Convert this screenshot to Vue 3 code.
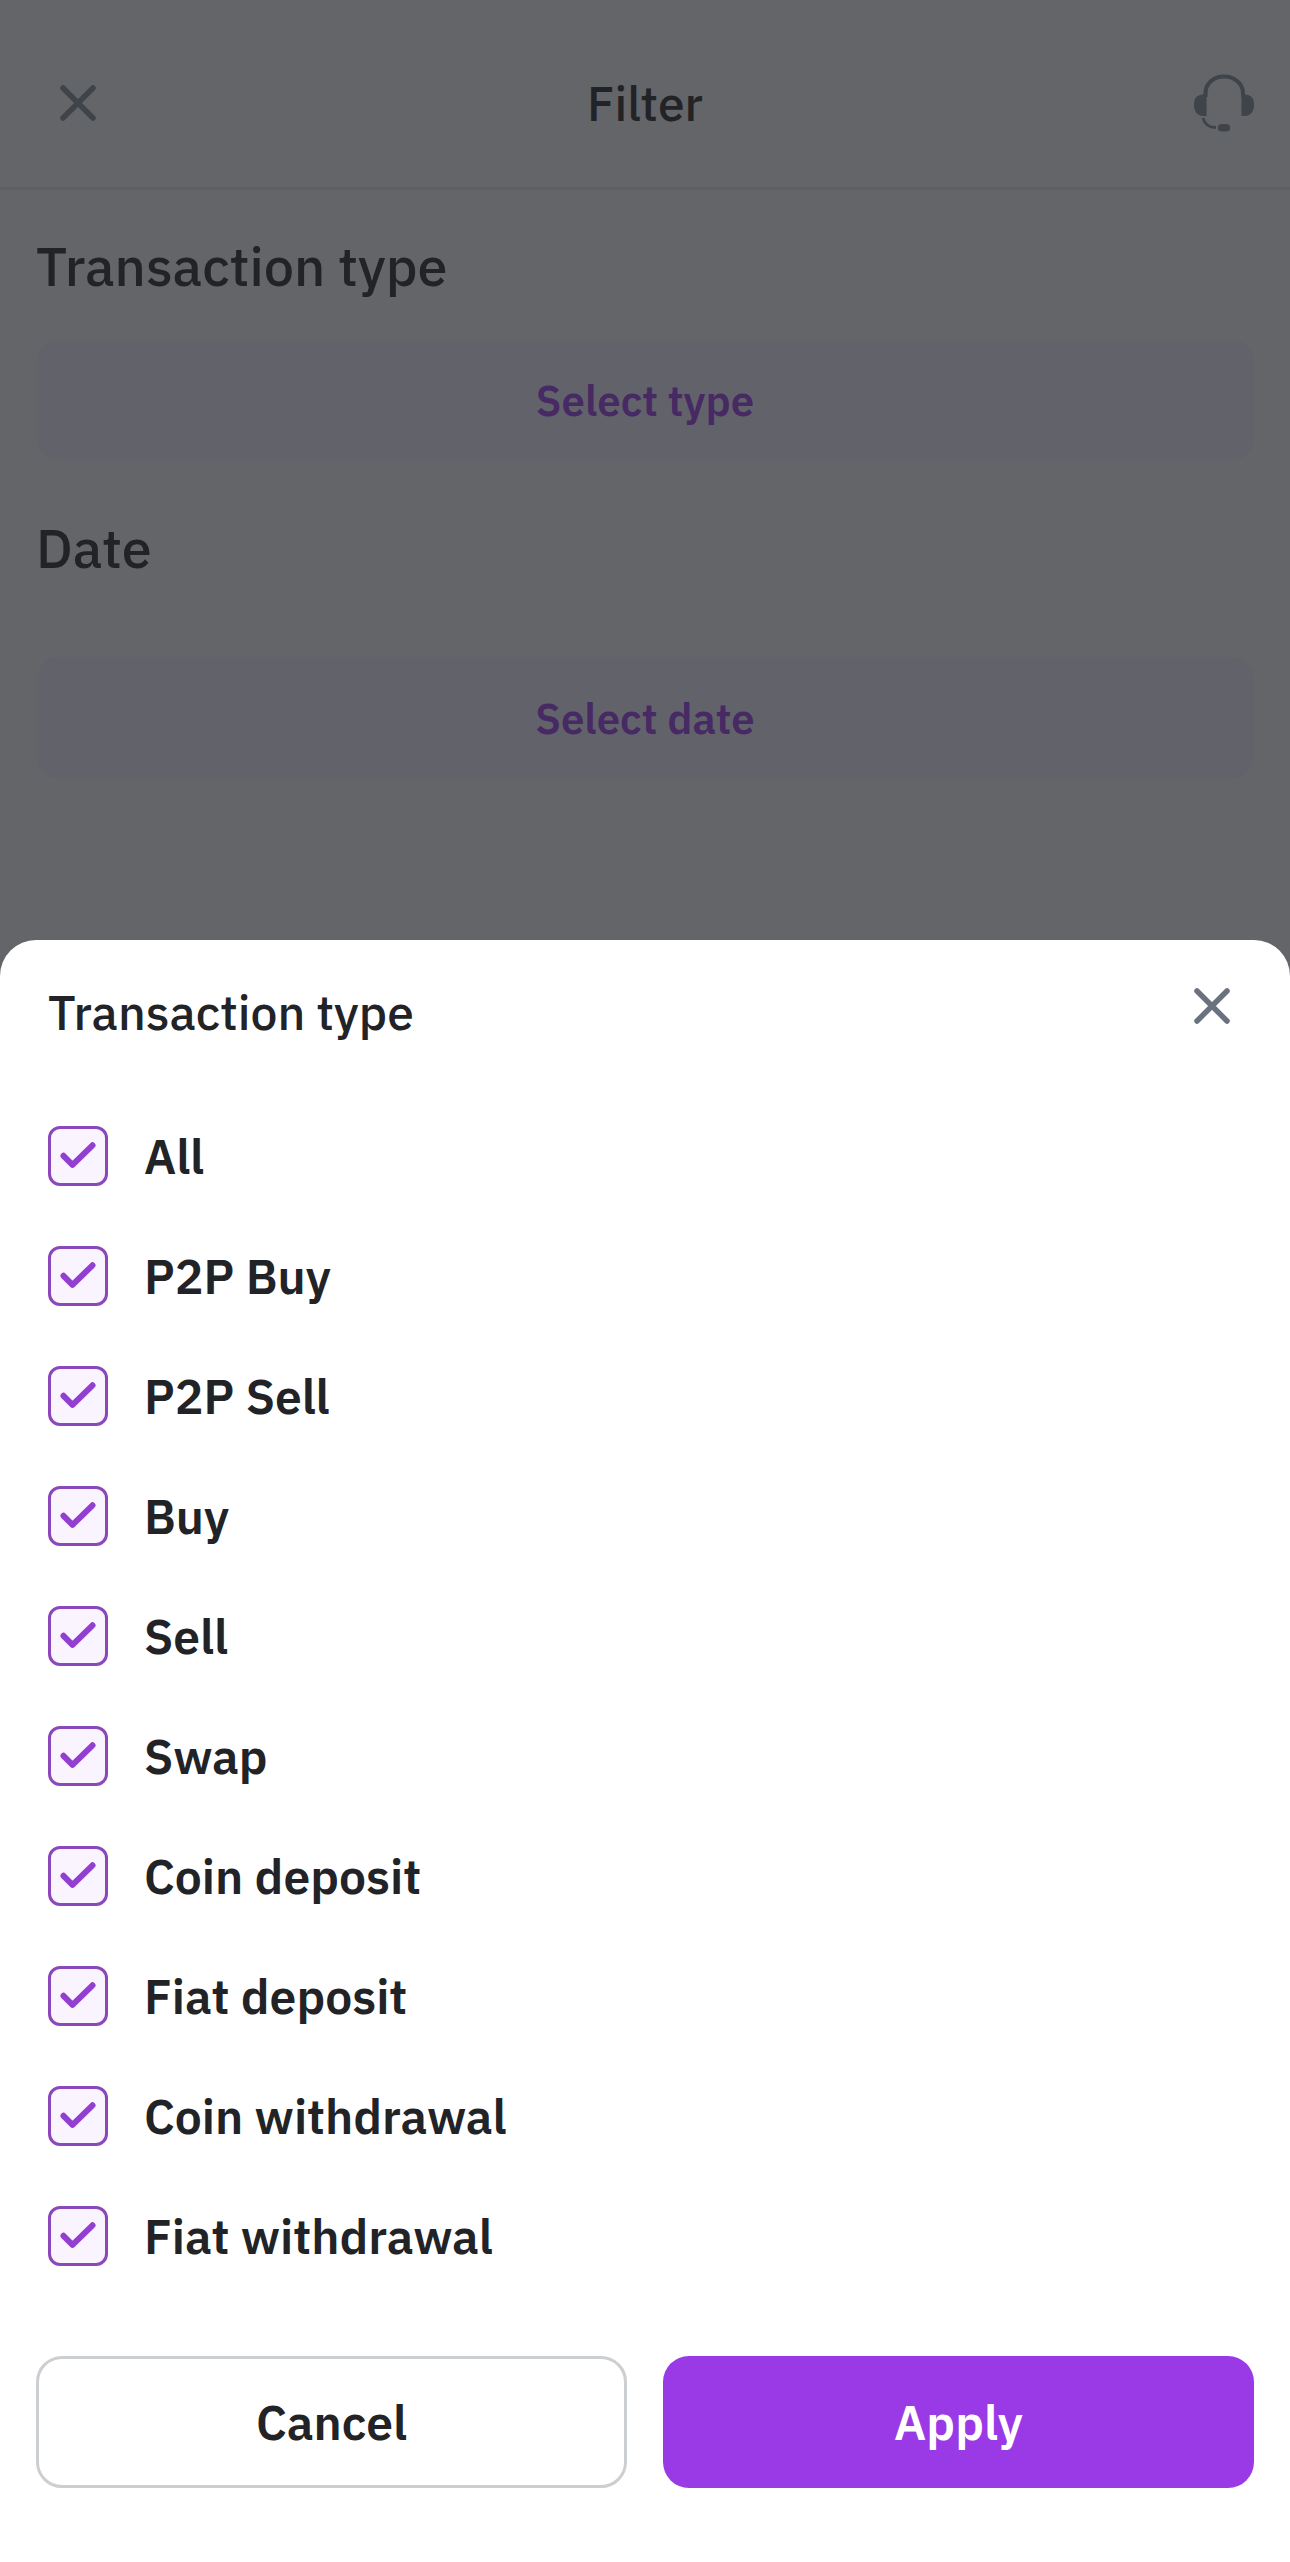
<template>
  <div class="screen">
    <!-- Dimmed page -->
    <div class="page">
      <header class="navbar">
        <button class="icon-btn" aria-label="Close">
          <svg width="36" height="36" viewBox="0 0 36 36">
            <path d="M3 3L33 33M33 3L3 33" />
          </svg>
        </button>
        <h1>Filter</h1>
        <button class="icon-btn" aria-label="Support">
          <svg class="headset" width="60" height="60" viewBox="0 0 60 60">
            <path class="line" d="M11.500 24V20.500C11.500 10.500 19.500 3.500 30 3.500S49 10.500 49 20.500V24" />
            <path class="fill" d="M12.500 20.500V43H9C3.500 43 0 38.500 0 32V31C0 25 3.500 21.500 9 21.500ZM47.500 20.500V43H51C56.500 43 60 38.500 60 32V31C60 25 56.500 21.500 51 21.500Z" />
            <path class="boom" d="M9 45C10.500 51 15 54.500 22 54.500" />
            <rect class="fill" x="24" y="51" width="12" height="7.500" rx="3.500" />
          </svg>
        </button>
      </header>

      <section class="field">
        <h2>Transaction type</h2>
        <button class="select-btn">Select type</button>
      </section>
      <section class="field date">
        <h2>Date</h2>
        <button class="select-btn">Select date</button>
      </section>
    </div>

    <!-- Bottom sheet -->
    <div class="sheet">
      <div class="sheet-header">
        <h3>Transaction type</h3>
        <button class="icon-btn sheet-close" aria-label="Close">
          <svg width="36" height="36" viewBox="0 0 36 36">
            <path d="M3 3L33 33M33 3L3 33" />
          </svg>
        </button>
      </div>

      <ul class="options">
        <li v-for="option in options" :key="option.label" @click="toggle(option)">
          <span class="checkbox" :class="{ checked: option.checked }">
            <svg v-if="option.checked" width="60" height="60" viewBox="0 0 60 60">
              <path d="M15.500 29.800L24.500 38.800L44.500 19.300" />
            </svg>
          </span>
          <span class="label">{{ option.label }}</span>
        </li>
      </ul>

      <div class="actions">
        <button class="cancel">Cancel</button>
        <button class="apply">Apply</button>
      </div>
    </div>
  </div>
</template>

<script setup>
import { ref } from 'vue'

const options = ref([
  { label: 'All', checked: true },
  { label: 'P2P Buy', checked: true },
  { label: 'P2P Sell', checked: true },
  { label: 'Buy', checked: true },
  { label: 'Sell', checked: true },
  { label: 'Swap', checked: true },
  { label: 'Coin deposit', checked: true },
  { label: 'Fiat deposit', checked: true },
  { label: 'Coin withdrawal', checked: true },
  { label: 'Fiat withdrawal', checked: true }
])

// "All" switches every option, the others only themselves
function toggle(option) {
  const value = !option.checked
  if (option.label === 'All') {
    options.value.forEach((o) => (o.checked = value))
    return
  }
  option.checked = value
  options.value[0].checked = options.value.slice(1).every((o) => o.checked)
}
</script>

<style>
body {
  margin: 0;
  background-color: #646569;
}
</style>

<style scoped>
.screen {
  display: flex;
  flex-direction: column;
  width: 1290px;
  height: 2562px;
  overflow: hidden;
  background-color: #646569;
  color: #222327;
  font-family: "IBM Plex Sans", Roboto, sans-serif;
}
h1,
h2,
h3,
ul {
  margin: 0;
  padding: 0;
  font-weight: 500;
}
button {
  margin: 0;
  padding: 0;
  border: none;
  background: none;
  color: inherit;
  font-family: inherit;
  cursor: pointer;
}
svg {
  display: block;
}
.page {
  height: 940px;
}
.navbar {
  box-sizing: border-box;
  display: grid;
  grid-template-columns: 1fr auto 1fr;
  align-items: center;
  height: 190px;
  padding: 18px 36px 0;
  border-bottom: 3px solid #5e5f64;
}
.navbar h1 {
  font-size: 48px;
  line-height: 62px;
}
.icon-btn path {
  fill: none;
  stroke: #3f434a;
  stroke-width: 5.5;
  stroke-linecap: round;
}
.navbar .icon-btn:first-child {
  justify-self: start;
  padding-left: 24px;
}
.navbar .icon-btn:last-child {
  justify-self: end;
}
.icon-btn .headset .line {
  stroke-width: 4;
  stroke-linecap: butt;
}
.icon-btn .headset .boom {
  stroke-width: 2.8;
  stroke-linecap: butt;
}
.icon-btn .headset .fill {
  fill: #3f434a;
  stroke: none;
}
.field {
  display: flex;
  flex-direction: column;
  gap: 37px;
  padding: 40px 36px 0;
}
.field.date {
  gap: 73px;
  padding-top: 51px;
}
.field h2 {
  font-size: 54px;
  line-height: 72px;
}
.select-btn {
  height: 122px;
  border-radius: 24px;
  background-color: #62626b;
  color: #472a64;
  font-size: 42px;
  font-weight: 600;
}
.sheet {
  box-sizing: border-box;
  display: flex;
  flex-direction: column;
  flex: 1;
  padding: 41px 36px 0;
  border-radius: 36px 36px 0 0;
  background-color: #fff;
}
.sheet-header {
  display: flex;
  justify-content: space-between;
  align-items: flex-start;
  height: 145px;
  padding: 0 24px 0 12px;
}
.sheet-header h3 {
  font-size: 48px;
  line-height: 62px;
}
.sheet-close {
  margin-top: 7px;
}
.sheet-close path {
  stroke: #6a7280;
}
.options {
  display: flex;
  flex-direction: column;
  gap: 60px;
  padding-left: 12px;
  list-style: none;
}
.options li {
  display: flex;
  align-items: center;
  gap: 36px;
  height: 60px;
}
.checkbox {
  box-sizing: border-box;
  width: 60px;
  height: 60px;
  border: 3px solid #8b48bb;
  border-radius: 12px;
}
.checkbox.checked {
  background-color: #faf4ff;
}
.checkbox svg {
  margin: -3px;
}
.checkbox path {
  fill: none;
  stroke: #923fd2;
  stroke-width: 6;
  stroke-linecap: round;
  stroke-linejoin: round;
}
.label {
  font-size: 48px;
  font-weight: 600;
  line-height: 62px;
}
.actions {
  display: grid;
  grid-template-columns: 1fr 1fr;
  gap: 36px;
  margin-top: 90px;
}
.actions button {
  box-sizing: border-box;
  height: 132px;
  border-radius: 26px;
  font-size: 48px;
  font-weight: 600;
}
.actions .cancel {
  border: 3px solid #cccfd2;
}
.actions .apply {
  background-color: #9a3ae6;
  color: #fff;
}
</style>
